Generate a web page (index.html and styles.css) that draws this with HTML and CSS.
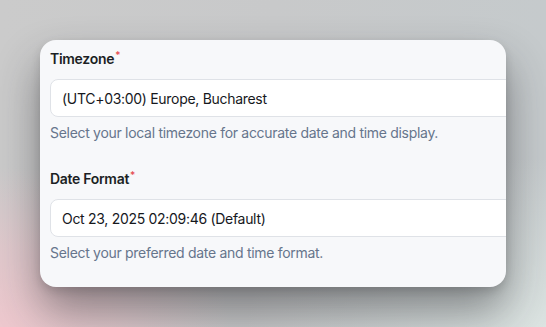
FILE: index.html
```html
<!DOCTYPE html>
<html lang="en">
<head>
<meta charset="utf-8">
<title>Settings</title>
<link rel="stylesheet" href="styles.css">
</head>
<body>
  <div class="stage">
    <form class="card">
      <div class="field">
        <label class="label">Timezone<span class="req">*</span></label>
        <div class="input">(UTC+03:00) Europe, Bucharest</div>
        <p class="help">Select your local timezone for accurate date and time display.</p>
      </div>
      <div class="field">
        <label class="label">Date Format<span class="req">*</span></label>
        <div class="input">Oct 23, 2025 02:09:46 (Default)</div>
        <p class="help">Select your preferred date and time format.</p>
      </div>
    </form>
  </div>
</body>
</html>
```
FILE: styles.css
```css
html, body {
  margin: 0;
  padding: 0;
  width: 546px;
  height: 327px;
  overflow: hidden;
}
body {
  font-family: Inter, "Noto Sans", sans-serif;
  letter-spacing: -0.3px;
  background:
    radial-gradient(ellipse 230px 160px at 0% 100%, rgba(238, 200, 206, 1) 0%, rgba(238, 200, 206, 0.6) 50%, rgba(238, 200, 206, 0) 100%),
    radial-gradient(ellipse 300px 170px at 100% 100%, rgba(220, 228, 226, 1) 0%, rgba(220, 228, 226, 0) 100%),
    linear-gradient(90deg, #cbcbcb 0%, #c8c9ca 50%, #c5cacc 100%);
}
.stage {
  padding: 40px 0 0 40px;
}
.card {
  box-sizing: border-box;
  width: 466px;
  height: 247px;
  margin: 0;
  padding: 9px 0 24px 10px;
  background: #f7f8fa;
  border-radius: 16px;
  overflow: hidden;
  box-shadow: 0 24px 44px rgba(30, 32, 36, 0.45), 0 4px 10px rgba(0, 0, 0, 0.14);
}
.field + .field {
  margin-top: 26px;
}
.label {
  display: block;
  font-size: 14px;
  line-height: 20px;
  font-weight: 600;
  color: #1c1f24;
  margin-bottom: 10px;
}
.req {
  color: #e5484d;
  font-size: 10px;
  font-weight: 500;
  vertical-align: top;
  position: relative;
  top: -4px;
  margin-left: 1px;
}
.input {
  box-sizing: border-box;
  width: 480px;
  height: 38px;
  padding: 0 11px;
  display: flex;
  align-items: center;
  background: #ffffff;
  border: 1px solid #dfe2e7;
  border-radius: 8px;
  font-size: 14px;
  color: #16181d;
}
.help {
  margin: 6px 0 0;
  font-size: 14px;
  line-height: 20px;
  color: #66758c;
}
```
